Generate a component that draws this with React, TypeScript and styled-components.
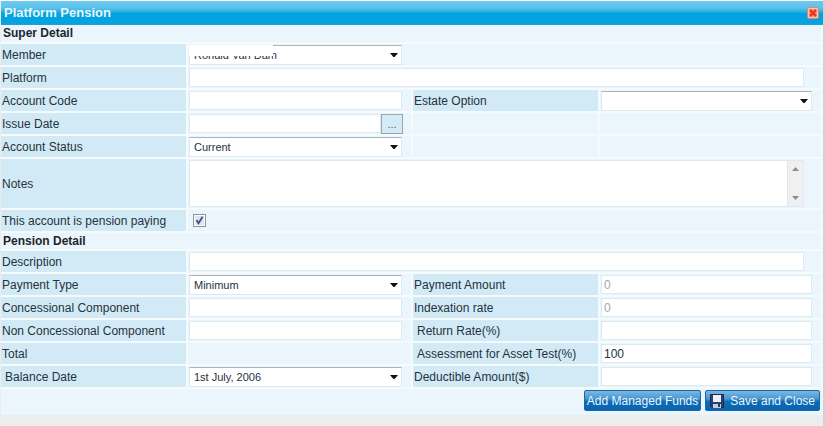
import React, { useState } from "react";
import styled, { createGlobalStyle, css } from "styled-components";

const GlobalStyle = createGlobalStyle`
  * { box-sizing: border-box; }
  body {
    margin: 0;
    background: #ecedef;
    font-family: "Liberation Sans", Arial, sans-serif;
    font-size: 12px;
    color: #26323c;
  }
  button, input, select, textarea { font: inherit; color: inherit; margin: 0; }
`;

const Dialog = styled.form`
  display: flex;
  flex-direction: column;
  min-height: 100vh;
  padding: 1px 0 0 1px;
  border-right: 2px solid #cfd1d3;
  background: linear-gradient(#ffffff, #ffffff) top / 100% 1px no-repeat, #ecedef;
`;

const TitleBar = styled.header`
  display: flex;
  align-items: center;
  justify-content: space-between;
  height: 24px;
  padding: 0 4px 0 3px;
  border-bottom: 1px solid #2a9bd0;
  background: linear-gradient(#6dcaee 0%, #5cc3eb 30%, #2fb2e4 45%, #00a3e0 55%, #04a4e0 100%);
`;

const Title = styled.h1`
  margin: 0;
  font-size: 13px;
  line-height: 16px;
  font-weight: bold;
  color: #e6f6fd;
`;

const CloseButton = styled.button`
  display: flex;
  padding: 0;
  border: 0;
  background: none;
`;

const Grid = styled.div`
  display: grid;
  grid-template-columns: 185fr 223fr 185fr 221fr;
  gap: 2px;
  padding: 0 2px 2px 0;
  background: #f5fafd;
`;

const SectionTitle = styled.h2<{ $height: number }>`
  grid-column: 1 / -1;
  height: ${(p) => p.$height}px;
  margin: 0;
  padding-left: 2px;
  background: #eaf5fc;
  font-size: 12px;
  line-height: ${(p) => p.$height}px;
  font-weight: bold;
  color: #20262c;
`;

const FieldLabel = styled.label<{ $inset?: boolean }>`
  display: flex;
  align-items: center;
  min-height: 21px;
  padding-left: ${(p) => (p.$inset ? 4 : 1)}px;
  background: #d2eaf6;
  line-height: 16px;
  white-space: nowrap;
`;

const TallLabel = styled(FieldLabel)`
  min-height: 49px;
`;

const Cell = styled.div<{ $wide?: boolean; $fill?: boolean }>`
  display: flex;
  align-items: center;
  min-width: 0;
  padding: 0 ${(p) => (p.$wide ? 17 : 9)}px 0 1px;
  background: #eaf5fc;
  ${(p) => (p.$wide || p.$fill) && css`grid-column: 2 / -1;`}
`;

const field = css`
  width: 100%;
  min-width: 0;
  height: 19px;
  border: 1px solid #dcebf3;
  border-radius: 0;
  background: #ffffff;
  outline: 0;
`;

const TextBox = styled.input`
  ${field}
  padding: 0 2px;
  &:disabled { color: #a3a8ac; }
`;

const SelectFrame = styled.div`
  position: relative;
  display: flex;
  width: 100%;
`;

const MemberWidth = styled.div`
  width: calc(35% - 5px);
`;

const SelectBox = styled.select`
  ${field}
  height: 20px;
  appearance: none;
  padding: 0 20px 0 4px;
  border-top-color: #adb4b9;
  font-size: 11px;
`;

const SelectArrow = styled.svg`
  position: absolute;
  right: 4px;
  top: 8px;
  pointer-events: none;
`;

const Redaction = styled.span`
  position: absolute;
  left: 0;
  top: 0;
  width: 84px;
  height: 11px;
  background: #ffffff;
`;

const PickButton = styled.button`
  flex: none;
  width: 22px;
  height: 20px;
  margin-right: -1px;
  padding: 0;
  border: 1px solid #9aa5ac;
  background: #d4ebf7;
  font-size: 11px;
  line-height: 16px;
  color: #4d5c68;
`;

const NotesFrame = styled.div`
  display: flex;
  width: 100%;
  height: 47px;
  border: 1px solid #dcebf3;
  background: #ffffff;
`;

const NotesBox = styled.textarea`
  flex: 1;
  min-width: 0;
  padding: 2px;
  border: 0;
  background: transparent;
  resize: none;
  outline: 0;
  overflow: hidden;
`;

const ScrollTrack = styled.div`
  display: flex;
  flex-direction: column;
  justify-content: space-between;
  align-items: center;
  width: 16px;
  padding: 6px 0;
  border-left: 1px solid #e2e6e9;
  background: #f0f0f0;
`;

const CheckFrame = styled.span`
  position: relative;
  display: flex;
  margin-left: 4px;
`;

const CheckBox = styled.input`
  appearance: none;
  width: 13px;
  height: 13px;
  border: 1px solid #8d949b;
  background: #dfe5ed;
  box-shadow: inset 0 0 0 1px #ffffff;
  &:not(:checked) + svg { display: none; }
`;

const CheckMark = styled.svg`
  position: absolute;
  left: 0;
  top: 0;
  pointer-events: none;
`;

const Footer = styled.footer`
  display: flex;
  justify-content: flex-end;
  gap: 4px;
  height: 26px;
  padding: 1px 3px 0 0;
  background: #eaf5fc;
`;

const ActionButton = styled.button`
  display: flex;
  align-items: center;
  justify-content: center;
  gap: 6px;
  height: 21px;
  padding: 0 2px;
  border: 1px solid #1769a8;
  border-radius: 2px;
  background: linear-gradient(#7db7e0 0%, #4a98d0 40%, #0f6cb6 55%, #0a63ae 100%);
  line-height: 16px;
  color: #e9f4fc;
  white-space: nowrap;
`;

const SaveButton = styled(ActionButton)`
  padding: 0 4px;
`;

function Select({ id, value, masked }: { id: string; value: string; masked?: boolean }) {
  return (
    <SelectFrame>
      <SelectBox id={id} defaultValue={value}>
        <option>{value}</option>
      </SelectBox>
      <SelectArrow width="8" height="4" viewBox="0 0 8 4" aria-hidden="true">
        <path d="M0 0h8L4.6 4H3.4z" fill="#111" />
      </SelectArrow>
      {masked && <Redaction />}
    </SelectFrame>
  );
}

function Row({ id, label, inset, wide, fill, children }: {
  id: string; label: string; inset?: boolean; wide?: boolean; fill?: boolean; children?: React.ReactNode;
}) {
  return (
    <>
      <FieldLabel htmlFor={id} $inset={inset}>{label}</FieldLabel>
      <Cell $wide={wide} $fill={fill}>{children}</Cell>
    </>
  );
}

export default function App() {
  const [paying, setPaying] = useState(true);
  return (
    <>
      <GlobalStyle />
      <Dialog onSubmit={(e) => e.preventDefault()}>
        <TitleBar>
          <Title>Platform Pension</Title>
          <CloseButton type="button" aria-label="Close">
            <svg width="12" height="12" viewBox="0 0 12 12" aria-hidden="true">
              <rect x="0.5" y="0.5" width="11" height="11" rx="1.5" fill="#f6c4b4" stroke="#dd8577" />
              <rect x="2" y="2" width="8" height="8" fill="#f3a68f" />
              <path d="M3 3l6 6M9 3l-6 6" stroke="#e8391b" strokeWidth="2.6" />
            </svg>
          </CloseButton>
        </TitleBar>
        <Grid>
          <SectionTitle $height={17}>Super Detail</SectionTitle>
          <Row id="member" label="Member" fill>
            <MemberWidth><Select id="member" value="Ronald Van Dam" masked /></MemberWidth>
          </Row>
          <Row id="platform" label="Platform" wide><TextBox id="platform" /></Row>
          <Row id="code" label="Account Code"><TextBox id="code" /></Row>
          <Row id="estate" label="Estate Option"><Select id="estate" value="" /></Row>
          <Row id="issue" label="Issue Date">
            <TextBox id="issue" />
            <PickButton type="button" aria-label="Pick issue date">...</PickButton>
          </Row>
          <Cell /><Cell />
          <Row id="status" label="Account Status"><Select id="status" value="Current" /></Row>
          <Cell /><Cell />
          <TallLabel htmlFor="notes">Notes</TallLabel>
          <Cell $wide>
            <NotesFrame>
              <NotesBox id="notes" />
              <ScrollTrack aria-hidden="true">
                <svg width="7" height="4" viewBox="0 0 7 4"><path d="M3.5 0L7 4H0z" fill="#8b8f93" /></svg>
                <svg width="7" height="4" viewBox="0 0 7 4"><path d="M0 0h7L3.5 4z" fill="#8b8f93" /></svg>
              </ScrollTrack>
            </NotesFrame>
          </Cell>
          <Row id="paying" label="This account is pension paying" fill>
            <CheckFrame>
              <CheckBox type="checkbox" id="paying" checked={paying} onChange={(e) => setPaying(e.target.checked)} />
              <CheckMark width="13" height="13" viewBox="0 0 13 13" aria-hidden="true">
                <path d="M3.5 6l2 3.2L9.6 2.8" fill="none" stroke="#44518f" strokeWidth="1.8" />
              </CheckMark>
            </CheckFrame>
          </Row>
          <SectionTitle $height={16}>Pension Detail</SectionTitle>
          <Row id="description" label="Description" wide><TextBox id="description" /></Row>
          <Row id="type" label="Payment Type"><Select id="type" value="Minimum" /></Row>
          <Row id="amount" label="Payment Amount"><TextBox id="amount" defaultValue="0" disabled /></Row>
          <Row id="conc" label="Concessional Component"><TextBox id="conc" /></Row>
          <Row id="index" label="Indexation rate"><TextBox id="index" defaultValue="0" disabled /></Row>
          <Row id="nonconc" label="Non Concessional Component"><TextBox id="nonconc" /></Row>
          <Row id="return" label="Return Rate(%)" inset><TextBox id="return" /></Row>
          <FieldLabel as="span">Total</FieldLabel>
          <Cell />
          <Row id="asset" label="Assessment for Asset Test(%)" inset><TextBox id="asset" defaultValue="100" /></Row>
          <Row id="balance" label="Balance Date" inset><Select id="balance" value="1st July, 2006" /></Row>
          <Row id="deduct" label="Deductible Amount($)"><TextBox id="deduct" /></Row>
        </Grid>
        <Footer>
          <ActionButton type="button">Add Managed Funds</ActionButton>
          <SaveButton type="submit">
            <svg width="14" height="14" viewBox="0 0 14 14" aria-hidden="true">
              <path d="M0.5 0.5h13v13H2L0.5 12z" fill="#2d3f6c" stroke="#1d2b52" />
              <rect x="3" y="1" width="8" height="7" fill="#eef2f8" />
              <rect x="3" y="10" width="8" height="4" fill="#c3cddd" />
              <rect x="8" y="10" width="2" height="3" fill="#26365f" />
            </svg>
            Save and Close
          </SaveButton>
        </Footer>
      </Dialog>
    </>
  );
}
